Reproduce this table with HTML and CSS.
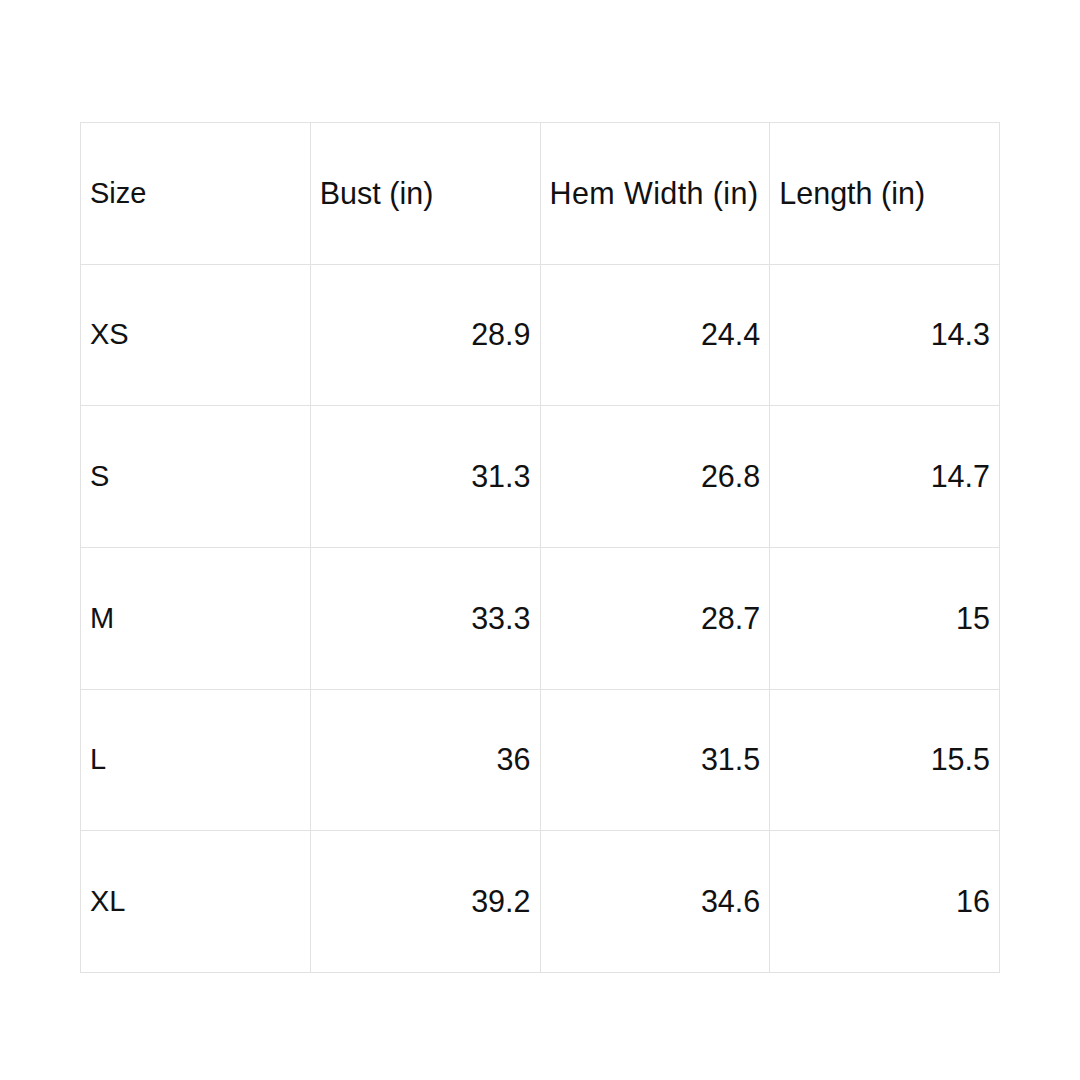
FILE: index.html
```html
<!DOCTYPE html>
<html>
<head>
<meta charset="utf-8">
<link rel="stylesheet" href="styles.css">
</head>
<body>
<div class="page">
<table class="chart">
<tr class="head"><td class="narrow">Size</td><td>Bust (in)</td><td class="wide">Hem Width (in)</td><td>Length (in)</td></tr>
<tr><td>XS</td><td class="num">28.9</td><td class="num">24.4</td><td class="num">14.3</td></tr>
<tr><td>S</td><td class="num">31.3</td><td class="num">26.8</td><td class="num">14.7</td></tr>
<tr><td>M</td><td class="num">33.3</td><td class="num">28.7</td><td class="num">15</td></tr>
<tr><td>L</td><td class="num">36</td><td class="num">31.5</td><td class="num">15.5</td></tr>
<tr><td>XL</td><td class="num">39.2</td><td class="num">34.6</td><td class="num">16</td></tr>
</table>
</div>
</body>
</html>
```
FILE: styles.css
```css
html, body { margin: 0; padding: 0; background: #fff; }
.page { width: 1080px; height: 1080px; padding: 122px 0 0 80px; box-sizing: border-box; }
.chart {
  border-collapse: collapse;
  width: 920px;
  table-layout: fixed;
  font-family: "Liberation Sans", Arial, sans-serif;
  font-size: 29px;
  color: #111;
}
.chart td {
  border: 1px solid #e2e2e2;
  height: 141.67px;
  padding: 0 9px;
  box-sizing: border-box;
  vertical-align: middle;
  white-space: nowrap;
}
.chart .num { text-align: right; font-size: 30.5px; }
.chart .head td { font-size: 30.5px; }
.chart .head .narrow { font-size: 29px; }
.chart .wide { letter-spacing: 0.4px; }
```
